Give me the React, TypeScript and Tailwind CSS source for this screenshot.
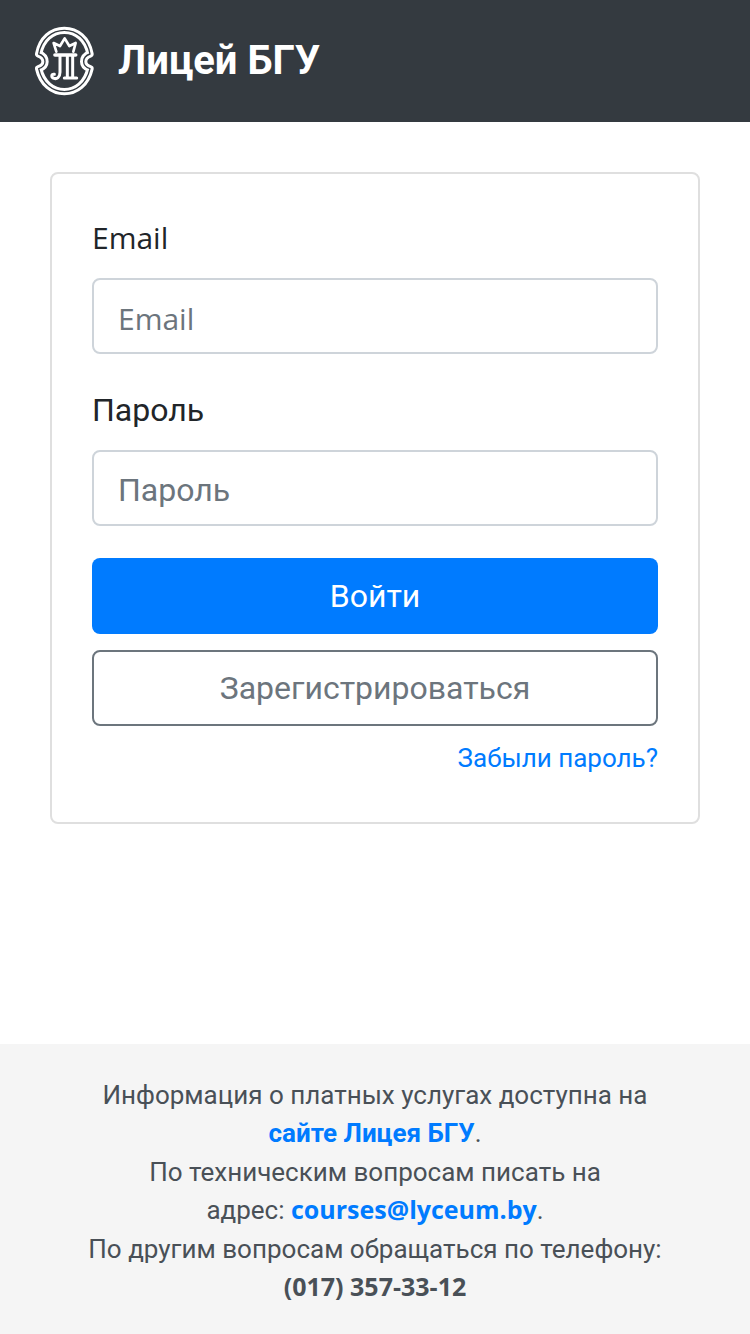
import { useState } from "react";
import type { FormEvent, InputHTMLAttributes } from "react";

interface FieldProps extends InputHTMLAttributes<HTMLInputElement> {
  id: string;
  label: string;
}

function Logo() {
  // The shield outline is one path stroked twice, which leaves a double ring
  const shield =
    "M133 46 C96 46 64 72 56 117 C68 121 75 130 75 140 C75 150 68 157 56 161 C66 206 98 230 133 230 C168 230 200 206 210 161 C198 157 191 150 191 140 C191 130 198 121 210 117 C202 72 170 46 133 46 Z";

  return (
    <svg
      className="h-[72px] w-16 shrink-0"
      viewBox="36 30 192 216"
      fill="none"
      strokeLinejoin="round"
      strokeLinecap="round"
      aria-hidden="true"
    >
      <path d={shield} stroke="#fff" strokeWidth="22" />
      <path d={shield} stroke="#343a40" strokeWidth="4" />
      <g stroke="#fff">
        <path
          d="M109 110 L101 84 L120 93 L134 70 L148 93 L167 84 L160 110"
          strokeWidth="8"
        />
        <path d="M105 120 H167" strokeWidth="11" />
        <path
          d="M120 122 V172 C120 187 110 193 102 190 C93 187 93 176 103 178"
          strokeWidth="9"
        />
        <path d="M142 122 V187 M158 122 V187" strokeWidth="9" />
        <path d="M133 189 H170" strokeWidth="9" />
      </g>
    </svg>
  );
}

function Field({ id, label, ...props }: FieldProps) {
  return (
    <div className="mb-8">
      <label htmlFor={id} className="mb-4 block leading-[48px]">
        {label}
      </label>
      <input
        id={id}
        placeholder={label}
        className="block h-[76px] w-full rounded-lg border-2 border-[#ced4da] bg-white px-6 pt-1 text-[#495057] outline-none placeholder:text-[#6c757d] focus:border-[#80bdff]"
        {...props}
      />
    </div>
  );
}

export default function App() {
  const [email, setEmail] = useState("");
  const [password, setPassword] = useState("");

  const handleSubmit = (e: FormEvent) => {
    e.preventDefault();
  };

  return (
    <div className="flex min-h-screen flex-col bg-white font-['Roboto','Noto_Sans',sans-serif] text-[32px] text-[#212529]">
      <header className="flex items-center gap-[22px] bg-[#343a40] px-8 py-[25px]">
        <Logo />
        <a href="#" className="text-[40px] leading-[60px] font-bold text-white">
          Лицей БГУ
        </a>
      </header>

      <main className="p-[50px]">
        <form
          onSubmit={handleSubmit}
          className="rounded-lg border-2 border-[#dfdfdf] p-10"
        >
          <div className="font-['Open_Sans',sans-serif] text-[30px]">
            <Field
              id="email"
              label="Email"
              type="email"
              value={email}
              onChange={(e) => setEmail(e.target.value)}
            />
          </div>
          <Field
            id="password"
            label="Пароль"
            type="password"
            value={password}
            onChange={(e) => setPassword(e.target.value)}
          />
          <button
            type="submit"
            className="mb-4 block h-[76px] w-full rounded-lg bg-[#007bff] text-white"
          >
            Войти
          </button>
          <button
            type="button"
            className="mb-2 block h-[76px] w-full rounded-lg border-2 border-[#6c757d] text-[#6c757d]"
          >
            Зарегистрироваться
          </button>
          <div className="text-right text-[26px] leading-[48px]">
            <a href="#" className="text-[#007bff]">
              Забыли пароль?
            </a>
          </div>
        </form>
      </main>

      <footer className="mt-auto flex flex-col gap-px bg-[#f5f5f5] px-8 pt-8 pb-7 text-center text-[26px] leading-[38px] text-[#495057]">
        <p>
          Информация о платных услугах доступна на
          <br />
          <a href="#" className="font-bold text-[#007bff]">
            сайте Лицея БГУ
          </a>
          .
        </p>
        <p>
          По техническим вопросам писать на
          <br />
          адрес:{" "}
          <a
            href="mailto:courses@lyceum.by"
            className="font-['Open_Sans',sans-serif] text-[25px] leading-6 font-bold text-[#007bff]"
          >
            courses@lyceum.by
          </a>
          .
        </p>
        <p>
          По другим вопросам обращаться по телефону:
          <br />
          <strong className="font-['Open_Sans',sans-serif] text-[25px] leading-6 font-bold">
            (017) 357-33-12
          </strong>
        </p>
      </footer>
    </div>
  );
}
